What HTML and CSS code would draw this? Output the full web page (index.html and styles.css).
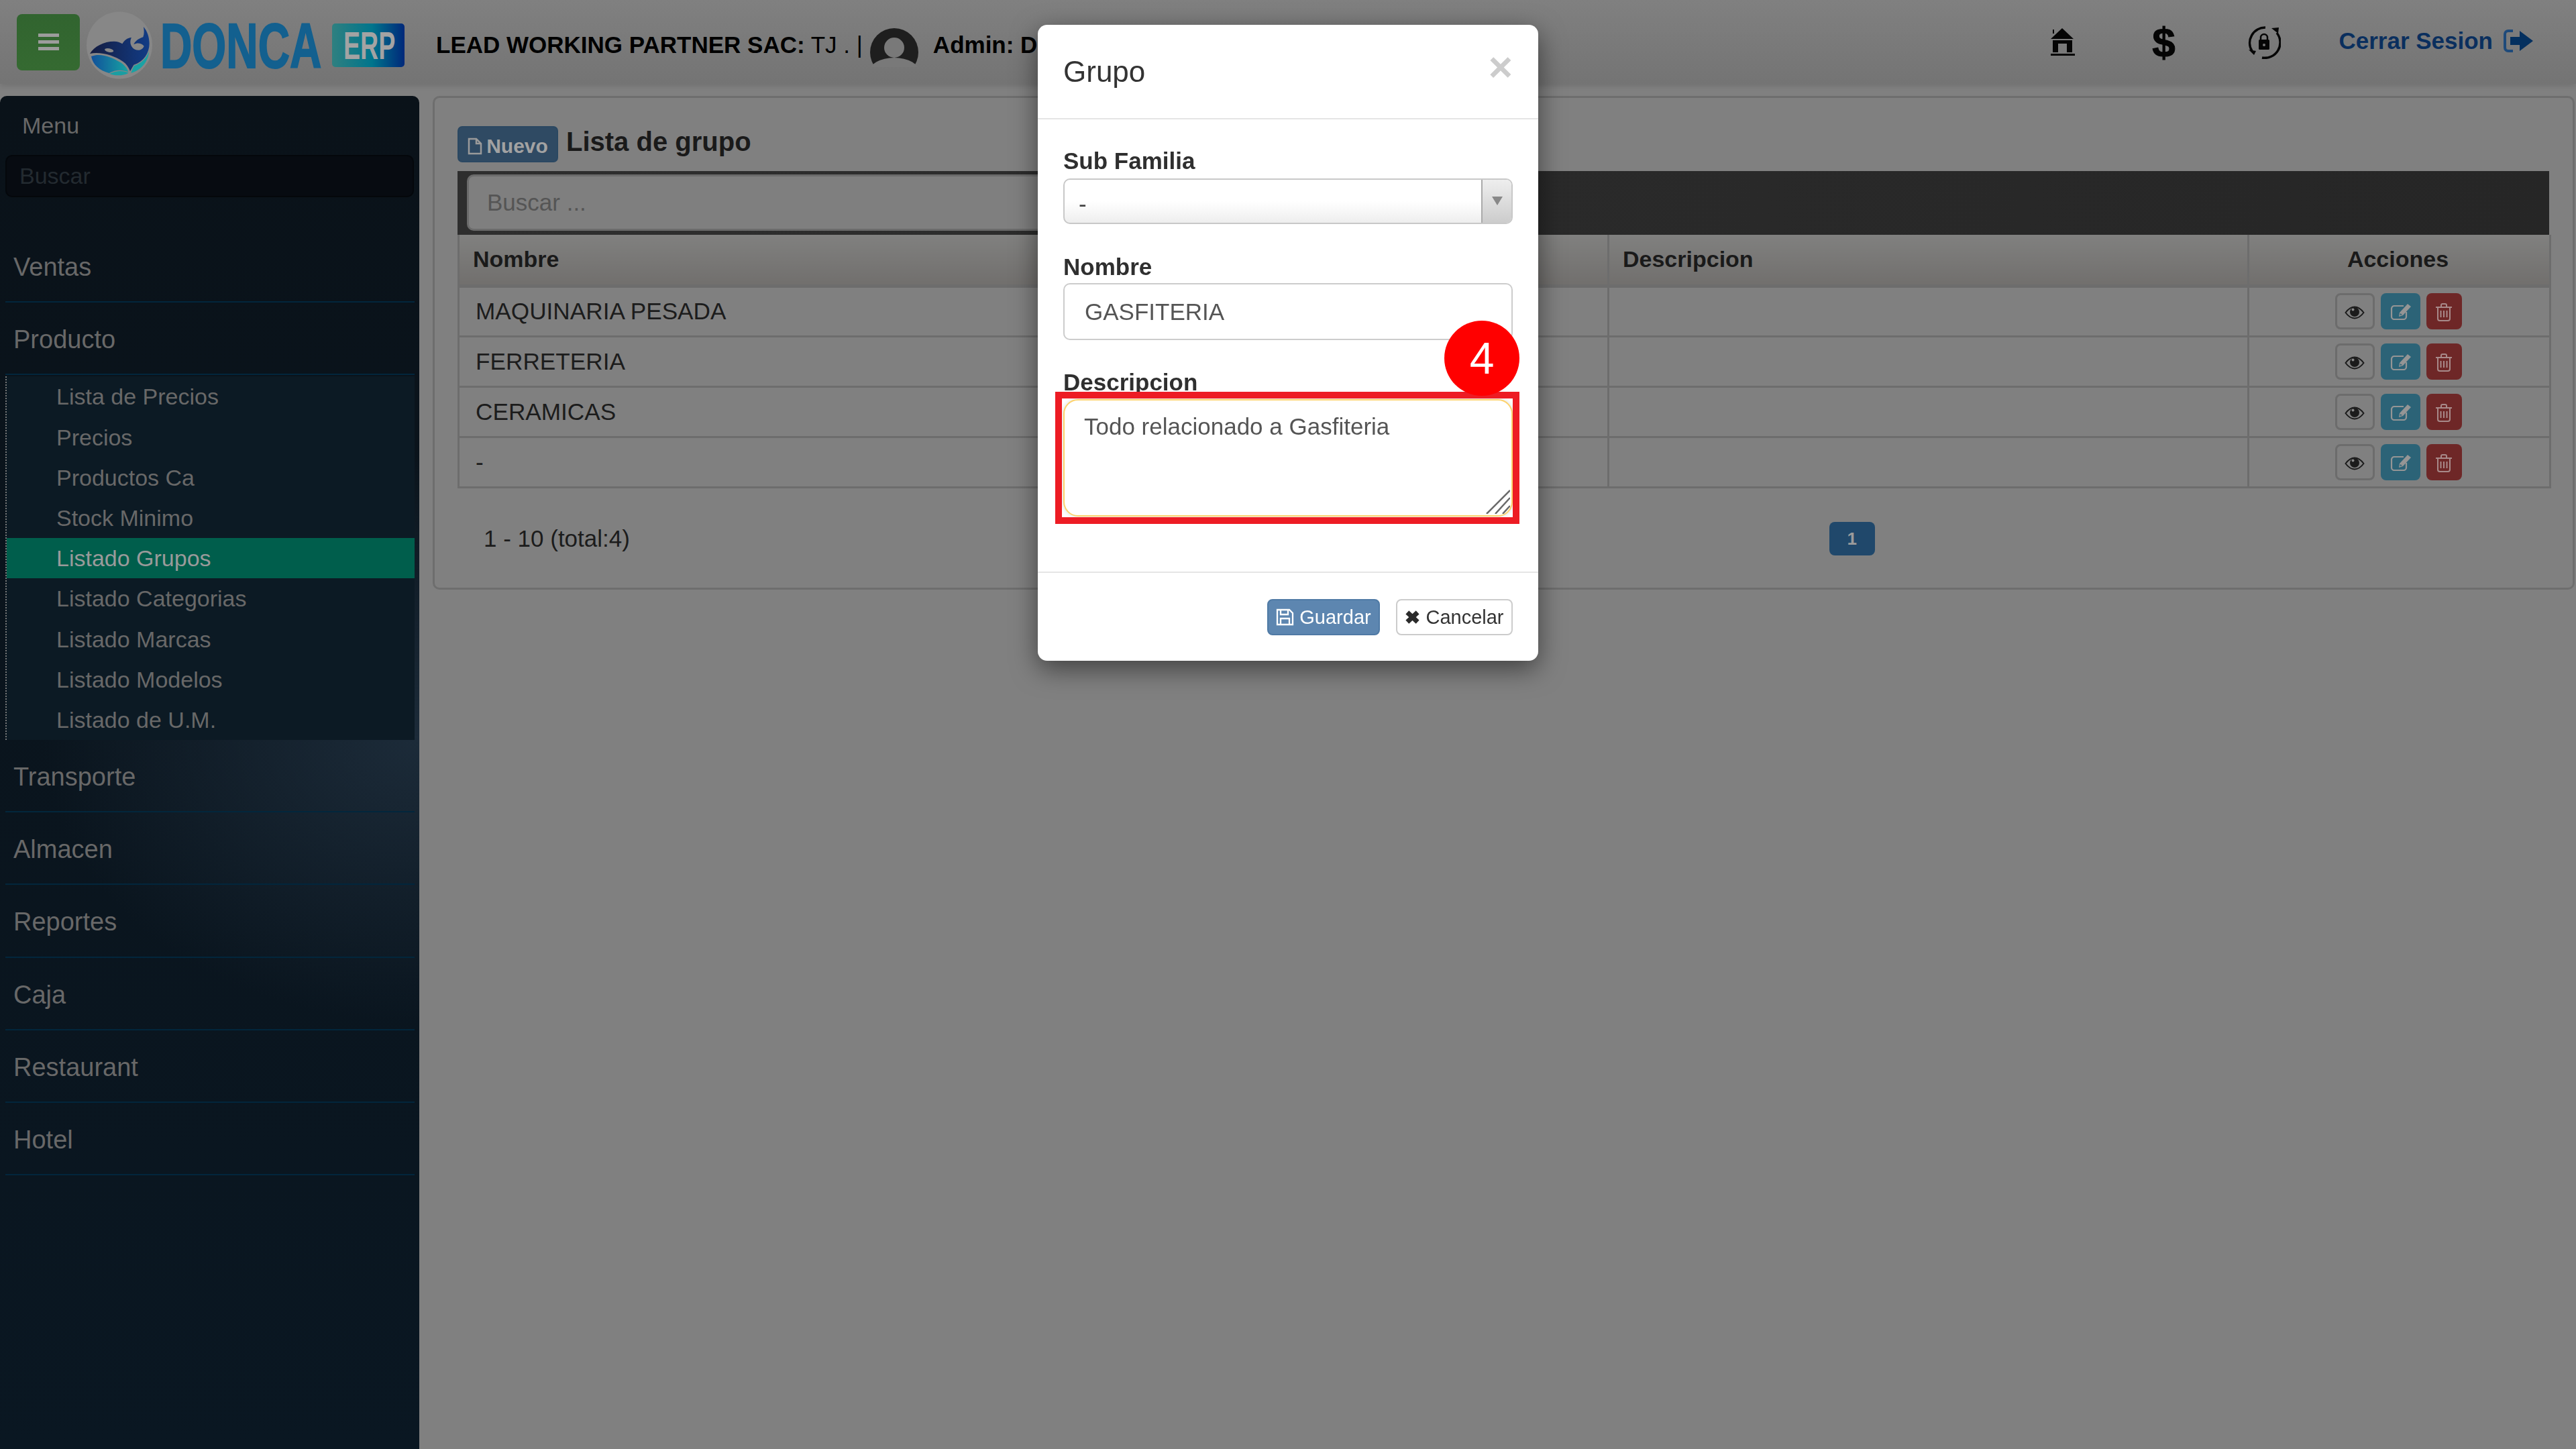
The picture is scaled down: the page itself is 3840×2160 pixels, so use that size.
FILE: index.html
```html
<!DOCTYPE html>
<html lang="es">
<head>
<meta charset="utf-8">
<title>Lista de grupo</title>
<link rel="stylesheet" href="styles.css">
</head>
<body>
<svg class="defs" width="0" height="0" aria-hidden="true">
  <symbol id="i-eye" viewBox="0 0 30 20">
    <path d="M1.500 10C6 4 10 1.500 15 1.500S24 4 28.500 10C24 16 20 18.500 15 18.500S6 16 1.500 10Z" fill="none" stroke="#1b1b1b" stroke-width="2"/>
    <circle cx="15" cy="9" r="7" fill="#1b1b1b"/>
    <circle cx="12.500" cy="5.500" r="2" fill="#8a8a8a"/>
  </symbol>
  <symbol id="i-edit" viewBox="0 0 31 24">
    <path d="M20 3H6a4 4 0 0 0-4 4v12a4 4 0 0 0 4 4h14a4 4 0 0 0 4-4v-7" fill="none" stroke="#959595" stroke-width="2.200"/>
    <path d="M26 0l5 4-12 13-6 2 1-6z" fill="#959595"/>
    <path d="M15 14l3 2-3.500 1z" fill="#2c6377"/>
  </symbol>
  <symbol id="i-trash" viewBox="0 0 24 27">
    <path d="M0 6H24M8 6V3a2 2 0 0 1 2-2h4a2 2 0 0 1 2 2v3" fill="none" stroke="#a88a8a" stroke-width="2"/>
    <path d="M3 6V23a3 3 0 0 0 3 3H18a3 3 0 0 0 3-3V6" fill="none" stroke="#a88a8a" stroke-width="2"/>
    <path d="M7.500 11V21M12 11V21M16.500 11V21" stroke="#a88a8a" stroke-width="2"/>
  </symbol>
</svg>

<header class="topbar">
  <button class="toggle" type="button" aria-label="Menu">
    <span class="toggle-bar"></span><span class="toggle-bar"></span><span class="toggle-bar"></span>
  </button>
  <svg class="logo" viewBox="129 8 474 116" width="474" height="116" role="img" aria-label="Donca ERP">
    <defs>
      <linearGradient id="g-whale" x1="0" x2="1" y1="0" y2="0"><stop offset="0" stop-color="#141c40"/><stop offset="1" stop-color="#123c86"/></linearGradient>
      <linearGradient id="g-wave" x1="0" x2="1" y1="0" y2="0"><stop offset="0" stop-color="#11509a"/><stop offset="1" stop-color="#17a3a3"/></linearGradient>
      <linearGradient id="g-erp" x1="0" x2="1" y1="0" y2="0"><stop offset="0" stop-color="#2f8080"/><stop offset=".55" stop-color="#00758c"/><stop offset="1" stop-color="#00287a"/></linearGradient>
    </defs>
    <ellipse cx="178" cy="67.500" rx="49" ry="50" fill="#878787"/>
    <g transform="translate(120 10) scale(.33333)">
      <path d="M42 210C60 178 105 155 150 155C165 155 178 160 187 166C196 150 208 140 228 138C220 152 222 170 232 182C245 198 275 200 284 176C272 162 255 160 238 168C248 150 262 142 280 136C286 120 284 105 282 90C298 108 308 135 308 165C308 205 285 245 238 260L222 288C215 270 205 255 190 245C150 218 90 200 42 210Z" fill="url(#g-whale)"/>
      <ellipse cx="128" cy="195" rx="20" ry="8" transform="rotate(10 128 195)" fill="#878787"/>
      <path d="M48 222C90 205 140 225 180 250C198 262 210 278 214 292C185 280 155 282 128 297C85 285 55 260 48 222Z" fill="url(#g-wave)"/>
      <path d="M240 264C270 254 295 232 306 200C304 245 270 285 226 296C230 285 234 275 240 264Z" fill="#1aa2a4"/>
      <path d="M130 300C160 285 190 285 215 296C190 310 155 310 130 300Z" fill="#1a9ea2"/>
    </g>
    <text class="logo-name" transform="translate(239 101) scale(.69 1)">DONCA</text>
    <rect x="495" y="35" width="108" height="65" rx="5" fill="url(#g-erp)"/>
    <text class="logo-erp" transform="translate(512 88) scale(.66 1)">ERP</text>
  </svg>
  <div class="company"><strong>LEAD WORKING PARTNER SAC:</strong> TJ . |</div>
  <svg class="avatar" viewBox="0 0 72 58" width="72" height="58" aria-hidden="true">
    <circle cx="36" cy="36" r="36" fill="#1e1e1e"/>
    <ellipse cx="36" cy="66" rx="38" ry="22" fill="#797979"/>
    <circle cx="36" cy="29" r="15" fill="#797979"/>
  </svg>
  <div class="admin">Admin: D</div>
  <nav class="top-actions">
    <a class="top-icon" href="#" aria-label="Inicio">
      <svg viewBox="0 0 36 41" width="36" height="41"><path d="M17 0L34 16H0Z M3 2h2v6H3Z M3 18H32V36H24V23H11V36H3Z M0 38H36V41H0Z" fill="#050505"/></svg>
    </a>
    <a class="top-icon dollar" href="#">$</a>
    <a class="top-icon" href="#" aria-label="Clave">
      <svg viewBox="0 0 50 50" width="50" height="50">
        <path d="M27 3A23 23 0 0 0 7 38M22 48A23 23 0 0 0 44 11" fill="none" stroke="#060606" stroke-width="3.500"/>
        <path d="M2 36L13 38L10 44Z M36 4L47 3L46 12Z" fill="#060606"/>
        <path d="M20 21V18a5 5 0 0 1 10 0v3" fill="none" stroke="#060606" stroke-width="2.500"/>
        <rect x="17" y="21" width="16" height="15" rx="1.500" fill="#060606"/>
        <circle cx="25" cy="29" r="2" fill="#777"/>
      </svg>
    </a>
    <a class="logout" href="#">Cerrar Sesion
      <svg viewBox="0 0 44 34" width="44" height="34" aria-hidden="true">
        <path d="M14 2H7a5 5 0 0 0-5 5V27a5 5 0 0 0 5 5H14" fill="none" stroke="#1e4a7a" stroke-width="4"/>
        <path d="M10 11H24V2L44 17L24 32V23H10Z" fill="#04305f"/>
      </svg>
    </a>
  </nav>
</header>

<div class="layout">
  <aside class="sidebar">
    <div class="side-title">Menu</div>
    <input class="side-search" type="text" placeholder="Buscar">
    <ul class="side-nav">
      <li class="side-item">Ventas</li>
      <li class="side-item">Producto</li>
      <li class="side-sub">
        <ul class="sub-list">
          <li class="sub-item">Lista de Precios</li>
          <li class="sub-item">Precios</li>
          <li class="sub-item">Productos Ca</li>
          <li class="sub-item">Stock Minimo</li>
          <li class="sub-item active">Listado Grupos</li>
          <li class="sub-item">Listado Categorias</li>
          <li class="sub-item">Listado Marcas</li>
          <li class="sub-item">Listado Modelos</li>
          <li class="sub-item">Listado de U.M.</li>
        </ul>
      </li>
      <li class="side-item">Transporte</li>
      <li class="side-item">Almacen</li>
      <li class="side-item">Reportes</li>
      <li class="side-item">Caja</li>
      <li class="side-item">Restaurant</li>
      <li class="side-item">Hotel</li>
    </ul>
  </aside>

  <main class="panel">
    <div class="panel-head">
      <button class="btn-new" type="button">
        <svg viewBox="0 0 22 26" width="22" height="26" aria-hidden="true"><path d="M2 2H13L20 9V24H2Z M13 2V9H20" fill="none" stroke="#9a9a9a" stroke-width="2.500"/></svg>
        Nuevo
      </button>
      <h1 class="panel-title">Lista de grupo</h1>
    </div>
    <div class="search-bar"><input class="search-input" type="text" placeholder="Buscar ..."></div>
    <table class="grid">
      <colgroup><col class="col-name"><col class="col-desc"><col class="col-act"></colgroup>
      <thead>
        <tr><th>Nombre</th><th class="th-desc">Descripcion</th><th class="th-act">Acciones</th></tr>
      </thead>
      <tbody>
        <tr><td>MAQUINARIA PESADA</td><td></td><td class="td-act"><div class="acts">
          <span class="act act-view"><svg width="30" height="20"><use href="#i-eye"/></svg></span>
          <span class="act act-edit"><svg width="31" height="24"><use href="#i-edit"/></svg></span>
          <span class="act act-del"><svg width="24" height="27"><use href="#i-trash"/></svg></span>
        </div></td></tr>
        <tr><td>FERRETERIA</td><td></td><td class="td-act"><div class="acts">
          <span class="act act-view"><svg width="30" height="20"><use href="#i-eye"/></svg></span>
          <span class="act act-edit"><svg width="31" height="24"><use href="#i-edit"/></svg></span>
          <span class="act act-del"><svg width="24" height="27"><use href="#i-trash"/></svg></span>
        </div></td></tr>
        <tr><td>CERAMICAS</td><td></td><td class="td-act"><div class="acts">
          <span class="act act-view"><svg width="30" height="20"><use href="#i-eye"/></svg></span>
          <span class="act act-edit"><svg width="31" height="24"><use href="#i-edit"/></svg></span>
          <span class="act act-del"><svg width="24" height="27"><use href="#i-trash"/></svg></span>
        </div></td></tr>
        <tr><td>-</td><td></td><td class="td-act"><div class="acts">
          <span class="act act-view"><svg width="30" height="20"><use href="#i-eye"/></svg></span>
          <span class="act act-edit"><svg width="31" height="24"><use href="#i-edit"/></svg></span>
          <span class="act act-del"><svg width="24" height="27"><use href="#i-trash"/></svg></span>
        </div></td></tr>
      </tbody>
    </table>
    <div class="pager">
      <div class="pager-info">1 - 10 (total:4)</div>
      <div class="pager-nav"><span class="page-btn">1</span></div>
    </div>
  </main>
</div>

<div class="modal-layer">
  <section class="modal">
    <header class="modal-head">
      <h2 class="modal-title">Grupo</h2>
      <span class="modal-close">×</span>
    </header>
    <div class="modal-body">
      <label class="field-label">Sub Familia</label>
      <div class="select">
        <span class="select-value">-</span>
        <span class="select-arrow"><span class="select-tri"></span></span>
      </div>
      <label class="field-label gap">Nombre</label>
      <input class="field-input" type="text" value="GASFITERIA">
      <label class="field-label gap tight">Descripcion</label>
      <div class="area-wrap">
        <textarea class="field-area">Todo relacionado a Gasfiteria</textarea>
        <svg class="area-grip" viewBox="0 0 36 36" width="36" height="36" aria-hidden="true">
          <path d="M1 36L36 1M14 36L36 12M25 36L36 24" stroke="#6a6a6a" stroke-width="2.500"/>
        </svg>
      </div>
    </div>
    <footer class="modal-foot">
      <button class="btn-save" type="button">
        <svg viewBox="0 0 27 26" width="27" height="26" aria-hidden="true"><path d="M2 2H20L25 7V24H2Z M7 2V9H18V2 M7 24V15H20V24" fill="none" stroke="#fff" stroke-width="2.300"/></svg>
        Guardar
      </button>
      <button class="btn-cancel" type="button">
        <svg viewBox="0 0 21 18" width="23" height="20" aria-hidden="true"><path d="M3.500 2.500L17.500 15.500M17.500 2.500L3.500 15.500" stroke="#2b2b2b" stroke-width="6.500"/></svg>
        Cancelar
      </button>
    </footer>
    <div class="callout-box"></div>
    <div class="callout-badge">4</div>
  </section>
</div>
</body>
</html>
```

FILE: styles.css
```css
* { box-sizing: border-box; }
html, body { margin: 0; height: 2160px; overflow: hidden; }
body { background: #808080; color: #1c1c1c; font: 35px/1.3 "Liberation Sans", Arial, sans-serif; }
.defs { display: block; height: 0; }
ul { list-style: none; margin: 0; padding: 0; }
button { font-family: inherit; cursor: pointer; }
h1, h2 { margin: 0; }

.topbar { height: 125px; display: flex; align-items: center; padding-left: 25px; background: linear-gradient(#808080, #747474); box-shadow: 0 3px 8px rgba(0, 0, 0, .12); }
.toggle { width: 94px; height: 84px; padding: 0; border: 0; border-radius: 8px; background: linear-gradient(#31642f, #356a31); display: flex; flex-direction: column; align-items: center; justify-content: center; gap: 5px; }
.toggle-bar { width: 31px; height: 5px; background: #9c9c9c; }
.logo { margin: 7px 0 0 10px; flex: none; }
.logo-name { font: bold 95px "Liberation Sans", Arial, sans-serif; fill: #13608f; stroke: #13608f; stroke-width: 2px; }
.logo-erp { font: bold 57px "Liberation Sans", Arial, sans-serif; fill: #a3a3a3; }
.company { margin: 9px 0 0 47px; color: #000; white-space: pre; }
.avatar { margin: 17px 0 0 11px; flex: none; }
.admin { margin: 9px 0 0 22px; color: #000; font-weight: bold; }
.top-actions { margin-left: auto; padding-right: 64px; display: flex; align-items: center; }
.top-icon { width: 150px; display: flex; justify-content: center; color: #050505; text-decoration: none; }
.dollar { font: bold 62px/1 "Liberation Sans", Arial, sans-serif; -webkit-text-stroke: 1px #050505; }
.logout { margin-left: 36px; padding-bottom: 3px; display: flex; align-items: center; gap: 16px; color: #0a2f5e; font-size: 35px; font-weight: bold; text-decoration: none; }

.layout { display: flex; align-items: flex-start; }
.sidebar { width: 625px; height: 2017px; margin-top: 18px; border-radius: 10px 10px 0 0; color: #686868;
  background: radial-gradient(ellipse 560px 420px at 625px 960px, #1c2b39, rgba(28, 43, 57, 0) 100%), linear-gradient(#0a1219, #0a1722); }
.side-title { padding: 21px 0 0 33px; height: 88px; font-size: 34px; line-height: 46px; }
.side-search { display: block; width: 609px; height: 63px; margin-left: 8px; padding: 0 19px; border: 2px solid #04070b; border-radius: 10px; background: #070b11; color: #232a30; font: 34px "Liberation Sans", Arial, sans-serif; outline: 0; }
.side-search::placeholder { color: #232a30; opacity: 1; }
.side-nav { margin: 49px 7px 0 8px; }
.side-item { height: 108.2px; padding: 33px 0 0 12px; border-bottom: 2px solid #02263c; font-size: 38px; line-height: 44px; }
.side-sub { background: #0c1a24; }
.sub-list { margin-top: 2px; border-left: 2px dotted #777; }
.sub-item { height: 60.2px; padding-left: 74px; font-size: 34px; line-height: 60px; }
.sub-item.active { background: #005e4c; color: #9a9a9a; }

.panel { flex: none; width: 3193px; margin: 18px 0 0 20px; padding: 42px 35px 48px 34px; border: 3px solid #6e6e6e; border-radius: 10px; background: #808080; }
.panel-head { display: flex; align-items: flex-start; gap: 12px; height: 67px; }
.btn-new { width: 150px; height: 54px; display: flex; align-items: center; justify-content: center; gap: 6px; padding: 6px 0 0; border: 2px solid #2b4862; border-radius: 7px; background: #2f4a63; color: #a2a2a2; font-size: 30px; font-weight: bold; }
.panel-title { font-size: 40px; line-height: 46px; font-weight: bold; color: #1a1a1a; }
.search-bar { height: 95px; padding: 5px 14px; background: linear-gradient(90deg, #2e2e2e, #262626); }
.search-input { display: block; width: 1000px; height: 84px; padding: 0 27px; border: 3px solid #6b6b6b; border-radius: 10px; background: #7f7f7f; color: #555; font: 35px "Liberation Sans", Arial, sans-serif; outline: 0; }
.search-input::placeholder { color: #555; opacity: 1; }

.grid { width: 3118px; border-collapse: collapse; table-layout: fixed; color: #1c1c1c; }
.col-name { width: 1714px; }
.col-desc { width: 954px; }
.col-act { width: 450px; }
.grid th { height: 76px; padding: 0 0 1px 20px; border: 3px solid #6d6d6d; border-top: 0; border-bottom: 5px solid #6d6d6d; background: linear-gradient(#80807f, #716f6d); color: #1a1a1a; font-size: 34px; font-weight: bold; text-align: left; }
.grid th.th-desc { padding-left: 20px; }
.grid th.th-act { padding-left: 0; padding-right: 4px; text-align: center; }
.grid td { height: 75px; padding: 0 0 0 24px; border: 3px solid #6d6d6d; font-size: 35.2px; }
.grid td.td-act { padding: 0; }
.acts { display: flex; justify-content: center; gap: 9px; padding-right: 3px; }
.act { height: 54px; display: flex; align-items: center; justify-content: center; border-radius: 8px; }
.act svg { display: block; }
.act-view { width: 59px; border: 3px solid #6c6c6c; padding-top: 4px; }
.act-edit { width: 59px; background: #2c6377; padding-top: 2px; }
.act-del { width: 53px; background: #6e2727; padding-top: 3px; }

.pager { display: grid; grid-template-columns: 1fr 2fr; align-items: center; height: 50px; margin-top: 50px; }
.pager-info { padding-left: 39px; color: #1c1c1c; }
.pager-nav { display: flex; justify-content: center; }
.page-btn { width: 68px; height: 50px; border-radius: 8px; background: #20486b; color: #9b9b9b; font-size: 26px; font-weight: bold; line-height: 50px; text-align: center; }

.modal-layer { position: fixed; inset: 0; }
.modal { position: relative; width: 746px; margin: 37px auto 0; border-radius: 14px; background: #fff; color: #333; box-shadow: 0 12px 38px rgba(0, 0, 0, .5); }
.modal-head { height: 141px; display: flex; justify-content: space-between; padding: 0 38px; border-bottom: 2px solid #e5e5e5; }
.modal-title { margin-top: 42px; font-size: 44px; line-height: 56px; font-weight: normal; color: #333; }
.modal-close { margin: 32px 0 0 0; color: #ccc; font-size: 62px; font-weight: bold; line-height: 62px; }
.modal-body { padding: 42px 38px 82px; }
.field-label { display: block; height: 40px; margin-bottom: 6px; font-size: 35px; font-weight: bold; line-height: 40px; color: #2f2f2f; }
.field-label.gap { margin-top: 44px; margin-bottom: 4px; }
.field-label.tight { margin-top: 43px; margin-bottom: 5px; }
.select { height: 68px; display: flex; border: 2px solid #c8c8c8; border-radius: 10px; overflow: hidden; background: linear-gradient(#fff 50%, #eee); }
.select-value { flex: 1; padding: 14px 0 0 21px; font-size: 35px; line-height: 44px; color: #444; }
.select-arrow { width: 45px; display: flex; justify-content: center; padding-top: 25px; border-left: 2px solid #aaa; background: linear-gradient(#eee, #ccc); }
.select-tri { width: 0; height: 0; border-left: 8px solid transparent; border-right: 8px solid transparent; border-top: 13px solid #888; }
.field-input { display: block; width: 100%; height: 85px; padding: 0 30px; border: 2px solid #ccc; border-radius: 10px; background: #fff; color: #555; font: 35px "Liberation Sans", Arial, sans-serif; outline: 0; }
.area-wrap { position: relative; height: 175px; }
.field-area { display: block; width: 100%; height: 175px; padding: 14px 29px; border: 2px solid #fdd36d; border-radius: 22px; background: #fff; color: #555; font: 35px/50px "Liberation Sans", Arial, sans-serif; outline: 0; resize: none; box-shadow: 0 0 6px rgba(0, 0, 0, .15); }
.area-grip { position: absolute; right: 4px; bottom: 4px; }
.modal-foot { display: flex; justify-content: flex-end; gap: 24px; padding: 39px 38px 38px; border-top: 2px solid #e5e5e5; }
.btn-save, .btn-cancel { height: 54px; display: flex; align-items: center; justify-content: center; gap: 8px; padding: 0; border-radius: 8px; font-size: 29px; }
.btn-save { width: 168px; border: 2px solid #4f7aa5; background: #5d86b0; color: #fff; }
.btn-cancel { width: 174px; border: 2px solid #ccc; background: #fff; color: #333; }
.callout-box { position: absolute; left: 26px; top: 547px; width: 692px; height: 197px; border: 10px solid #ed1c24; pointer-events: none; }
.callout-badge { position: absolute; left: 606px; top: 441px; width: 112px; height: 112px; border-radius: 50%; background: #f00; color: #fff; font-size: 66px; line-height: 112px; text-align: center; }
```
